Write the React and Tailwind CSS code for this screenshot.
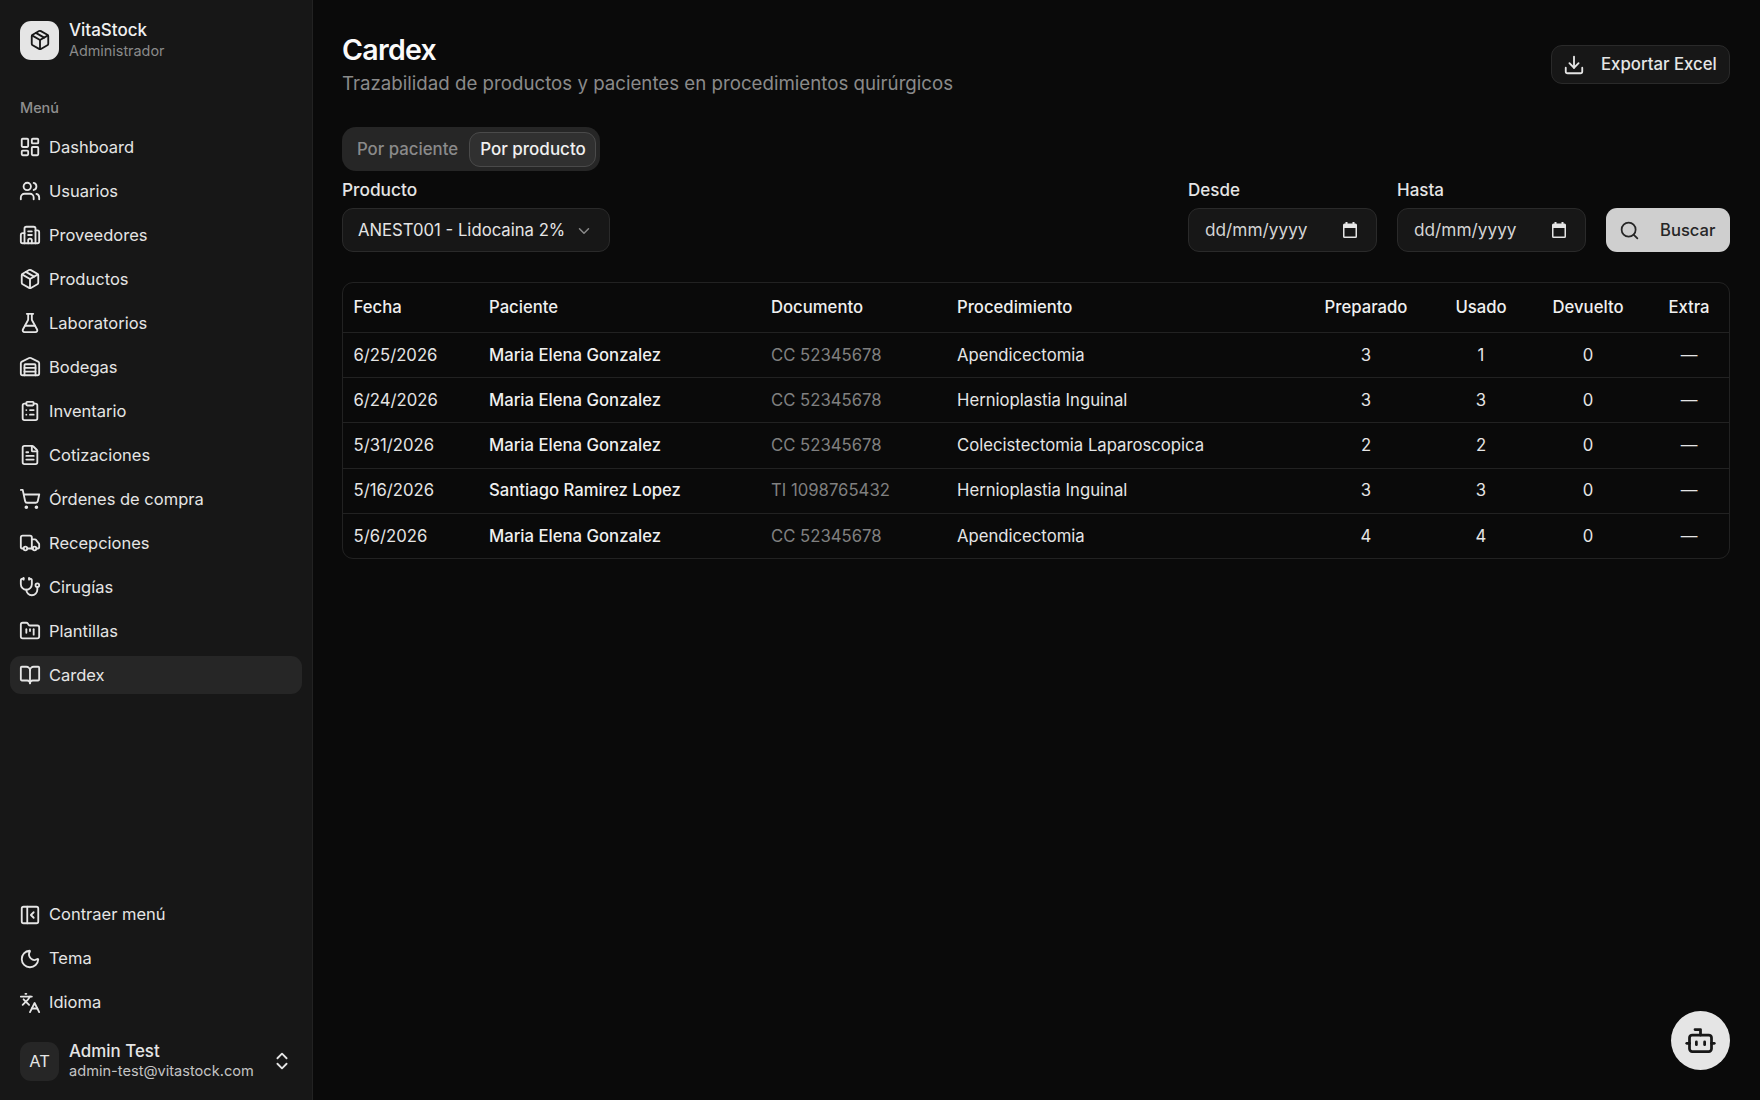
import {
  LayoutDashboard, Users, Building2, Package, FlaskConical, Warehouse, ClipboardList, FileText,
  ShoppingCart, Truck, Stethoscope, FolderKanban, BookOpen, PanelLeftClose, Moon, Languages,
  ChevronsUpDown, Download, Search, ChevronDown, Bot,
} from "lucide-react";

const menu = [
  ["Dashboard", LayoutDashboard],
  ["Usuarios", Users],
  ["Proveedores", Building2],
  ["Productos", Package],
  ["Laboratorios", FlaskConical],
  ["Bodegas", Warehouse],
  ["Inventario", ClipboardList],
  ["Cotizaciones", FileText],
  ["Órdenes de compra", ShoppingCart],
  ["Recepciones", Truck],
  ["Cirugías", Stethoscope],
  ["Plantillas", FolderKanban],
  ["Cardex", BookOpen, true],
];

const rows = [
  ["6/25/2026", "Maria Elena Gonzalez", "CC 52345678", "Apendicectomia", 3, 1, 0],
  ["6/24/2026", "Maria Elena Gonzalez", "CC 52345678", "Hernioplastia Inguinal", 3, 3, 0],
  ["5/31/2026", "Maria Elena Gonzalez", "CC 52345678", "Colecistectomia Laparoscopica", 2, 2, 0],
  ["5/16/2026", "Santiago Ramirez Lopez", "TI 1098765432", "Hernioplastia Inguinal", 3, 3, 0],
  ["5/6/2026", "Maria Elena Gonzalez", "CC 52345678", "Apendicectomia", 4, 4, 0],
];

const NavItem = ({ label, icon: Icon, active }) => (
  <a className={`flex h-[38.5px] items-center gap-2 rounded-[11px] px-[9px] text-[16.5px] text-[#e5e5e5] ${active ? "bg-[#262626]" : ""}`}>
    <Icon size={22} strokeWidth={2} className="shrink-0" />
    <span>{label}</span>
  </a>
);

const CalendarGlyph = () => (
  <svg width="14" height="16" viewBox="0 0 14 16" className="mr-[3px] text-[#e5e5e5]" fill="currentColor">
    <path d="M2.500 0h2v1.500h5V0h2v1.500h1A1.500 1.500 0 0 1 14 3v11.500a1.500 1.500 0 0 1-1.500 1.500h-11A1.500 1.500 0 0 1 0 14.500V3a1.500 1.500 0 0 1 1.500-1.500h1V0zM1.500 6v8.500h11V6h-11z" />
  </svg>
);

const DateField = ({ label }) => (
  <div className="w-[189px]">
    <div className="mb-1.5 text-[17px] leading-6 font-[450] text-[#e5e5e5]">{label}</div>
    <div className="flex h-11 items-center justify-between rounded-[11px] border border-[#2a2a2a] bg-[#171717] pr-4 pl-4 text-[17.25px] text-[#d4d4d4]">
      <span>dd/mm/yyyy</span>
      <CalendarGlyph />
    </div>
  </div>
);

const Sidebar = () => (
  <aside className="flex h-full w-[313px] shrink-0 flex-col border-r border-[#222222] bg-[#171717] pt-5 pb-[19px]">
    <div className="flex items-center gap-[10px] px-5">
      <div className="flex size-[39px] items-center justify-center rounded-[11px] bg-[#e5e5e5] text-[#171717]">
        <Package size={22} />
      </div>
      <div>
        <div className="text-[17px] leading-[21px] font-[550] text-[#f0f0f0]">VitaStock</div>
        <div className="text-[14.4px] leading-[19px] text-[#8a8a8a]">Administrador</div>
      </div>
    </div>

    <div className="mt-9 px-5 text-[14.4px] leading-[23px] font-medium text-[#8f8f8f]">Menú</div>

    <nav className="mt-[8.5px] flex flex-col gap-[5.5px] px-2.5 [&_span]:pt-px [&_svg]:mt-px">
      {menu.map(([label, icon, active]) => (
        <NavItem key={label} label={label} icon={icon} active={active} />
      ))}
    </nav>

    <div className="mt-auto flex flex-col gap-[5.5px] px-2.5">
      <NavItem label="Contraer menú" icon={PanelLeftClose} />
      <NavItem label="Tema" icon={Moon} />
      <NavItem label="Idioma" icon={Languages} />
    </div>

    <div className="mt-[19px] flex items-center gap-[10px] px-5">
      <div className="flex size-[39px] items-center justify-center rounded-[11px] bg-[#262626] text-[16.5px] text-[#e5e5e5]">AT</div>
      <div className="flex-1">
        <div className="text-[16.9px] leading-[21px] font-[450] text-[#e5e5e5]">Admin Test</div>
        <div className="text-[14.6px] leading-[19px] whitespace-nowrap text-[#c4c4c4]">admin-test@vitastock.com</div>
      </div>
      <ChevronsUpDown size={22} className="mr-[-1px] text-[#e5e5e5]" />
    </div>
  </aside>
);

const Main = () => (
  <main className="min-w-0 flex-1 pt-[31px] pr-[30px] pl-[29px]">
    <div className="flex items-center justify-between">
      <div>
        <h1 className="text-[28.5px] leading-[38px] font-semibold tracking-tight text-[#fafafa]">Cardex</h1>
        <p className="mt-px text-[18.7px] leading-[27px] text-[#8a8a8a]">
          Trazabilidad de productos y pacientes en procedimientos quirúrgicos
        </p>
      </div>
      <button className="flex h-[39px] w-[179px] items-center gap-[16px] rounded-[11px] border border-[#2a2a2a] bg-[#171717] pt-px pl-[11px] text-[16.76px] font-[450] text-[#e5e5e5]">
        <Download size={22} />
        Exportar Excel
      </button>
    </div>

    <div className="mt-[30px] flex h-11 w-[258px] items-center rounded-[14px] bg-[#262626] px-[4.5px]">
      <div className="flex h-[35px] w-[122px] items-center justify-center pt-px text-[16.8px] font-[450] text-[#8a8a8a]">Por paciente</div>
      <div className="flex h-[35px] w-[127px] items-center justify-center rounded-[11px] border border-[#4a4a4a] bg-[#303030] pt-px pl-[2px] text-[17px] font-[450] text-[#f0f0f0]">Por producto</div>
    </div>

    <div className="mt-[7px] flex items-end">
      <div className="w-[268px]">
        <div className="mb-1.5 text-[17.3px] leading-6 font-[450] text-[#e5e5e5]">Producto</div>
        <div className="flex h-11 items-center justify-between rounded-[11px] border border-[#2a2a2a] bg-[#171717] pt-px pr-[16px] pl-[15px] text-[16.7px] whitespace-nowrap text-[#e5e5e5]">
          <span>ANEST001 - Lidocaina 2%</span>
          <ChevronDown size={18} className="text-[#8a8a8a]" />
        </div>
      </div>
      <div className="ml-auto flex items-end gap-5">
        <DateField label="Desde" />
        <DateField label="Hasta" />
        <button className="flex h-11 w-[124px] items-center gap-[20px] rounded-[11px] bg-[#cfcfcf] pl-[13px] text-[16.6px] font-[450] text-[#262626]">
          <Search size={21} />
          Buscar
        </button>
      </div>
    </div>

    <div className="mt-[29.5px] overflow-hidden rounded-[11px] border border-[#222222]">
      <table className="w-full table-fixed border-collapse text-[16.7px] text-[#e5e5e5]">
        <colgroup>
          <col className="w-[135px]" />
          <col className="w-[282px]" />
          <col className="w-[186px]" />
          <col className="w-[351px]" />
          <col className="w-[138px]" />
          <col className="w-[92px]" />
          <col className="w-[122px]" />
          <col className="w-[80px]" />
        </colgroup>
        <thead>
          <tr className="h-[50px] border-b border-[#222222] text-[#f0f0f0]">
            <th className="px-[10.500px] text-left font-[450]">Fecha</th>
            <th className="px-[11px] text-left font-[450]">Paciente</th>
            <th className="px-[11px] text-left font-[450]">Documento</th>
            <th className="px-[11px] text-left font-[450]">Procedimiento</th>
            <th className="px-[11px] text-center font-[450]">Preparado</th>
            <th className="px-[11px] text-center font-[450]">Usado</th>
            <th className="px-[11px] text-center font-[450]">Devuelto</th>
            <th className="px-[11px] text-center font-[450]">Extra</th>
          </tr>
        </thead>
        <tbody>
          {rows.map((r, i) => (
            <tr key={i} className="h-[45.2px] border-b border-[#222222] last:border-b-0">
              <td className="px-[10.500px]">{r[0]}</td>
              <td className="px-[11px] font-medium text-[#f0f0f0]">{r[1]}</td>
              <td className="px-[11px] text-[#808080]">{r[2]}</td>
              <td className="px-[11px]">{r[3]}</td>
              <td className="px-[11px] text-center">{r[4]}</td>
              <td className="px-[11px] text-center">{r[5]}</td>
              <td className="px-[11px] text-center">{r[6]}</td>
              <td className="px-[11px] text-center">—</td>
            </tr>
          ))}
        </tbody>
      </table>
    </div>
  </main>
);

export default function App() {
  return (
    <div className="relative flex h-screen overflow-hidden bg-[#0a0a0a] font-['Inter',sans-serif]">
      <Sidebar />
      <Main />
      <button className="absolute right-[30px] bottom-[30px] flex size-[59px] items-center justify-center rounded-full bg-[#e5e5e5] text-[#171717]">
        <Bot size={33} />
      </button>
    </div>
  );
}
